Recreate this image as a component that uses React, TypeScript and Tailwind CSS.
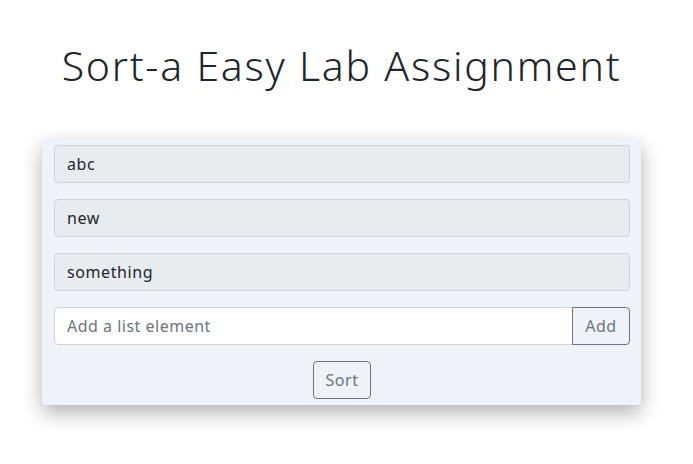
import React, { useState } from 'react';

export default function App() {
  const [items, setItems] = useState<string[]>(['abc', 'new', 'something']);
  const [draft, setDraft] = useState('');

  const addItem = () => {
    if (!draft.trim()) return;
    setItems([...items, draft.trim()]);
    setDraft('');
  };

  return (
    <div className="min-h-screen bg-white text-[#212529] font-['Noto_Sans',sans-serif]">
      <div className="w-[683px]">
        <h1 className="text-center text-[41px] font-light leading-[48px] pt-[41px] tracking-[1.75px]">Sort-a Easy Lab Assignment</h1>

        <div className="mx-[42px] mt-[50px] w-[599px] bg-[#eff3f7] rounded-[4px] pl-[12px] pr-[11px] pt-[6px] pb-[6px] shadow-[0_8px_20px_rgba(0,0,0,0.3)] flex flex-col">
          {items.map((item, i) => (
            <div key={i} className="h-[38px] mb-[16px] flex items-center px-[12px] bg-[#e9ecef] border border-[#ced4da] rounded-[4px] text-[16px] tracking-[0.6px] text-[#212529]">
              {item}
            </div>
          ))}

          <div className="flex h-[38px]">
            <input
              value={draft}
              onChange={(e) => setDraft(e.target.value)}
              placeholder="Add a list element"
              className="flex-1 min-w-0 h-full bg-white border border-[#ced4da] rounded-l-[4px] px-[12px] text-[16px] tracking-[0.5px] text-[#212529] placeholder:text-[#6c757d] outline-none"
            />
            <button
              onClick={addItem}
              className="w-[58px] h-full border border-[#6c757d] rounded-r-[4px] -ml-px text-[16px] tracking-[0.5px] text-[#6c757d]"
            >
              Add
            </button>
          </div>

          <div className="flex justify-center mt-[16px]">
            <button
              onClick={() => setItems([...items].sort())}
              className="w-[58px] h-[38px] border border-[#6c757d] rounded-[4px] text-[16px] tracking-[0.5px] text-[#6c757d]"
            >
              Sort
            </button>
          </div>
        </div>
      </div>
    </div>
  );
}
